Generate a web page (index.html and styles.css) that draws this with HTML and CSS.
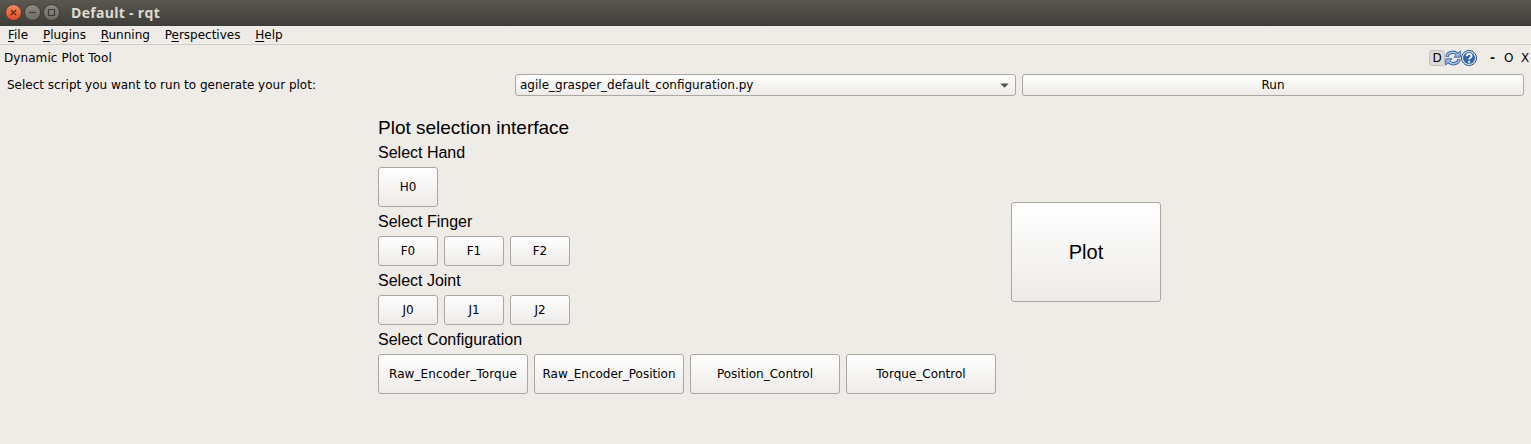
FILE: index.html
```html
<!DOCTYPE html>
<html lang="en">
<head>
<meta charset="utf-8">
<title>Default - rqt</title>
<link rel="stylesheet" href="styles.css">
</head>
<body>
<header class="titlebar">
  <svg class="controls" width="60" height="26" viewBox="0 0 60 26">
    <defs>
      <linearGradient id="close" x1="0" y1="0" x2="0" y2="1"><stop offset="0" stop-color="#f58b65"/><stop offset="1" stop-color="#e1491b"/></linearGradient>
      <linearGradient id="gray" x1="0" y1="0" x2="0" y2="1"><stop offset="0" stop-color="#8f8c83"/><stop offset="1" stop-color="#6b6962"/></linearGradient>
    </defs>
    <g stroke="#3a3934" stroke-width="1">
      <circle cx="13.5" cy="12.5" r="8" fill="url(#close)"/>
      <circle cx="32.5" cy="12.5" r="8" fill="url(#gray)"/>
      <circle cx="51.5" cy="12.5" r="8" fill="url(#gray)"/>
    </g>
    <g fill="none" stroke="#3c3b37" stroke-width="1.2">
      <path d="M10.800 9.800l5.400 5.400M16.200 9.800l-5.400 5.400" stroke="#51230f"/>
      <path d="M29 12.500h7"/>
      <path d="M48.500 9.500h6v6h-6z"/>
    </g>
  </svg>
  <h1 class="title">Default - rqt</h1>
</header>
<nav class="menubar">
  <span><u>F</u>ile</span><span><u>P</u>lugins</span><span><u>R</u>unning</span><span>P<u>e</u>rspectives</span><span><u>H</u>elp</span>
</nav>
<div class="dock">
  <span class="dock-title">Dynamic Plot Tool</span>
  <span class="dock-d">D</span>
  <svg class="dock-icon" width="16" height="16" viewBox="0 0 16 16">
    <g fill="none" stroke="#3465a4" stroke-width="3.400">
      <path d="M1.900 7C2.400 4 5 2.300 7.800 2.300c2 0 3.300.7 4.400 1.900"/>
      <path d="M14.100 9C13.600 12 11 13.700 8.200 13.700c-2 0-3.300-.7-4.400-1.900"/>
    </g>
    <path d="M15.300.8v6.400H9zM.7 15.200V8.800H7z" fill="#8fb5e2" stroke="#3465a4" stroke-width=".9"/>
    <g fill="none" stroke="#a9c6ea" stroke-width="1.400">
      <path d="M1.900 6.400C2.600 3.800 5 2.300 7.800 2.300c2 0 3.500.9 5.200 2.700"/>
      <path d="M14.100 9.600C13.400 12.200 11 13.700 8.200 13.700c-2 0-3.500-.9-5.200-2.700"/>
    </g>
  </svg>
  <svg class="dock-icon" width="16" height="16" viewBox="0 0 16 16">
    <circle cx="8" cy="8" r="7.500" fill="#e9f0f8" stroke="#204a87"/>
    <circle cx="8" cy="8" r="6" fill="#3566a8"/>
    <path d="M5.600 6.300C5.700 4.600 6.700 3.900 8.100 3.900c1.500 0 2.500.8 2.500 2 0 1.700-2.400 1.800-2.400 3.700" fill="none" stroke="#fff" stroke-width="1.700"/>
    <circle cx="8.100" cy="11.900" r="1.100" fill="#fff"/>
  </svg>
  <span class="dock-ctl dash">-</span><span class="dock-ctl float">O</span><span class="dock-ctl">X</span>
</div>
<main>
  <div class="script-row">
    <label class="script-label">Select script you want to run to generate your plot:</label>
    <div class="button combo"><span>agile_grasper_default_configuration.py</span>
      <svg width="9" height="5" viewBox="0 0 9 5"><path d="M.3.500h8.400L4.500 4.800z" fill="#53514d"/></svg>
    </div>
    <div class="button run">Run</div>
  </div>
  <div class="panel">
    <section class="selection">
      <h2>Plot selection interface</h2>
      <h3>Select Hand</h3>
      <div class="group tall"><div class="button small">H0</div></div>
      <h3>Select Finger</h3>
      <div class="group"><div class="button small">F0</div><div class="button small">F1</div><div class="button small">F2</div></div>
      <h3>Select Joint</h3>
      <div class="group"><div class="button small">J0</div><div class="button small">J1</div><div class="button small">J2</div></div>
      <h3>Select Configuration</h3>
      <div class="group tall"><div class="button wide torque">Raw_Encoder_Torque</div><div class="button wide">Raw_Encoder_Position</div><div class="button wide">Position_Control</div><div class="button wide">Torque_Control</div></div>
    </section>
    <div class="button plot">Plot</div>
  </div>
</main>
</body>
</html>
```
FILE: styles.css
```css
* { box-sizing: border-box; }
body {
  margin: 0;
  height: 444px;
  overflow: hidden;
  background: #efebe7;
  color: #000;
  font: 12px/14px "DejaVu Sans", sans-serif;
}
.titlebar {
  display: flex;
  height: 26px;
  background: linear-gradient(#5a5850, #3e3d39);
}
.controls { display: block; }
.title {
  margin: 0 0 0 11px;
  color: #dfdbd2;
  font: bold 14px/26px "Open Sans", sans-serif;
  letter-spacing: 0.3px;
}
.menubar {
  display: flex;
  gap: 14.8px;
  height: 19px;
  padding: 2px 8px 0;
  border-bottom: 1px solid #d1cec9;
}
.menubar u { text-underline-offset: 2px; text-decoration-thickness: 1px; text-decoration-skip-ink: none; }
.dock {
  display: flex;
  align-items: center;
  height: 26px;
  padding: 0 2px 0 4px;
}
.dock-title { margin-right: auto; letter-spacing: 0.08px; }
.dock-d {
  width: 16px;
  height: 16px;
  border: 1px solid #c3c0bc;
  border-radius: 3px;
  background: #dedbd7;
  text-align: center;
}
.dock-ctl { width: 8px; }
.dash { margin: 0 6px 0 13px; font-weight: bold; }
.float { margin-right: 9px; }
.script-row {
  display: flex;
  gap: 6px;
  padding: 3px 7px 0;
}
.script-label { width: 502px; line-height: 22px; }
.button {
  display: flex;
  align-items: center;
  justify-content: center;
  height: 30px;
  border: 1px solid #aaa6a2;
  border-radius: 3px;
  background: linear-gradient(#fff, #edebe8);
}
.combo {
  width: 501px;
  height: 22px;
  padding: 0 6px 0 4px;
  justify-content: space-between;
}
.run { width: 502px; height: 22px; }
.panel {
  display: flex;
  gap: 15px;
  padding: 20px 0 0 378px;
}
.selection { width: 618px; }
h2, h3 {
  margin: 0;
  font-family: "Liberation Sans", sans-serif;
  font-weight: normal;
}
h2 { font-size: 19px; line-height: 24px; }
h3 { height: 29px; padding-top: 6px; font-size: 16px; line-height: 18px; }
h2 + h3 { height: 27px; padding-top: 4px; }
.group { display: flex; gap: 6px; }
.tall .button { height: 40px; }
.small { width: 60px; }
.wide { width: 150px; }
.torque { letter-spacing: 0.1px; }
.plot {
  width: 150px;
  height: 100px;
  margin-top: 86px;
  font: 20px/24px "Liberation Sans", sans-serif;
}
```
